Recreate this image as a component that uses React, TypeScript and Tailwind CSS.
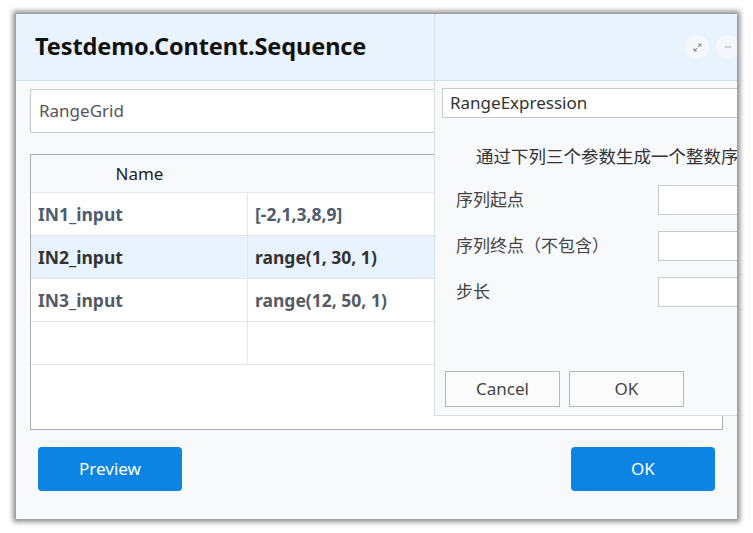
import { Maximize2, Minus } from "lucide-react";

const rows = [
  { name: "IN1_input", value: "[-2,1,3,8,9]", tone: "text-[#4e5c6c]", bg: "bg-white" },
  { name: "IN2_input", value: "range(1, 30, 1)", tone: "text-[#333333]", bg: "bg-[#e9f3fd]" },
  { name: "IN3_input", value: "range(12, 50, 1)", tone: "text-[#555b63]", bg: "bg-white" },
  { name: "", value: "", tone: "", bg: "bg-white" },
];

const fields = ["序列起点", "序列终点（不包含）", "步长"];

const RangeDialog = () => {
  return (
    <div className="absolute left-[418px] top-0 w-[340px] h-[402px] bg-[#f7f9fb] border-l border-b border-[#d9dee4] flex flex-col">
      <div className="h-[67px] bg-[#e9f3fd] border-b border-[#d5e0ea] flex items-center pl-[250px] gap-[7px]">
        <div className="w-[24px] h-[24px] rounded-full bg-[#f4f8fc] flex items-center justify-center">
          <Maximize2 size={9} strokeWidth={2.5} className="text-[#777]" />
        </div>
        <div className="w-[24px] h-[24px] rounded-full bg-[#f4f8fc] flex items-center justify-center">
          <Minus size={10} strokeWidth={2} className="text-[#999]" />
        </div>
      </div>
      <div className="pl-[7px] pt-[7px]">
        <div className="h-[30px] bg-white border border-[#c6c9cd] flex items-center px-[7px] text-[17px] text-[#333]">
          RangeExpression
        </div>
      </div>
      <div className="pl-[41px] mt-[26px] text-[17.5px] leading-[24px] text-[#333] whitespace-nowrap">
        通过下列三个参数生成一个整数序列
      </div>
      <div className="flex flex-col gap-[16px] mt-[17px]">
        {fields.map((f) => (
          <div key={f} className="flex items-center h-[30px]">
            <div className="w-[223px] pl-[21px] text-[17px] text-[#444] whitespace-nowrap">{f}</div>
            <div className="flex-1 h-[30px] bg-white border border-[#c6c9cd]" />
          </div>
        ))}
      </div>
      <div className="flex gap-[9px] pl-[10px] mt-[64px]">
        <button className="w-[115px] h-[36px] bg-[#fbfbfb] border border-[#b4b7bb] text-[17px] text-[#444]">
          Cancel
        </button>
        <button className="w-[115px] h-[36px] bg-[#fbfbfb] border border-[#b4b7bb] text-[17px] text-[#444]">
          OK
        </button>
      </div>
    </div>
  );
};

const App = () => {
  return (
    <div
      className="w-[753px] h-[533px] bg-white pl-[16px] pt-[14px]"
      style={{ fontFamily: '"Noto Sans", "Noto Sans CJK SC", sans-serif' }}
    >
      <div className="relative w-[721px] h-[505px] bg-[#f7f9fb] overflow-hidden shadow-[0_0_5px_3px_rgba(0,0,0,0.45)] flex flex-col">
        <div className="h-[67px] bg-[#e9f3fd] border-b border-[#d5e0ea] flex items-center pl-[19px]">
          <span className="text-[23.5px] font-bold text-[#111] tracking-[-0.1px]">Testdemo.Content.Sequence</span>
        </div>
        <div className="px-[14px] pt-[8px] flex flex-col">
          <div className="h-[44px] bg-white border border-[#c6c9cd] flex items-center px-[8px] text-[17px] text-[#555]">
            RangeGrid
          </div>
          <div className="mt-[21px] h-[276px] bg-white border border-[#a9acb0] flex flex-col">
            <div className="h-[38px] bg-[#f7f9fb] border-b border-[#e3e7eb] flex items-center">
              <div className="w-[217px] text-center text-[17px] text-[#222]">Name</div>
            </div>
            {rows.map((r, i) => (
              <div key={i} className={`h-[43px] flex border-b border-[#e3e7eb] ${r.bg}`}>
                <div className={`w-[217px] border-r border-[#e3e7eb] flex items-center pl-[7px] text-[17.5px] font-bold ${r.tone}`}>
                  {r.name}
                </div>
                <div className={`flex-1 flex items-center pl-[7px] text-[17.5px] font-bold ${r.tone}`}>{r.value}</div>
              </div>
            ))}
          </div>
          <div className="mt-[17px] flex justify-between px-[8px]">
            <button className="w-[144px] h-[44px] rounded-[4px] bg-[#0b84e4] text-white text-[17px]">Preview</button>
            <button className="w-[144px] h-[44px] rounded-[4px] bg-[#0b84e4] text-white text-[17px]">OK</button>
          </div>
        </div>
        <RangeDialog />
      </div>
    </div>
  );
};

export default App;
